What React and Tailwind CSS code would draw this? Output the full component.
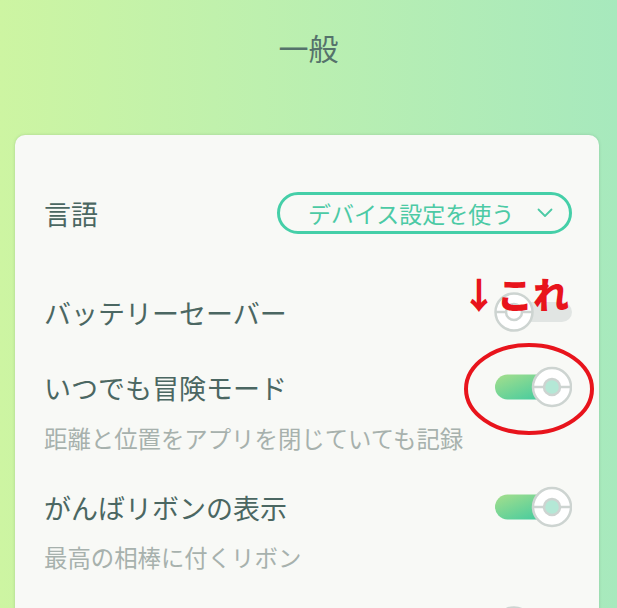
import React from 'react';

const FONT = { fontFamily: '"Noto Sans CJK JP", "Noto Sans", sans-serif' };

// pokeball-style switch, drawn as one picture
const Toggle = ({ on }) => {
  const gray = '#cdd4d1';
  if (on) {
    return (
      <svg width="80" height="44" viewBox="0 0 80 44" className="shrink-0">
        <defs>
          <linearGradient id="trk" x1="0" y1="0" x2="1" y2="1">
            <stop offset="0" stopColor="#a6df8c" />
            <stop offset="1" stopColor="#36c8a2" />
          </linearGradient>
        </defs>
        <rect x="3" y="9.5" width="62" height="25" rx="12.5" fill="url(#trk)" />
        <circle cx="60" cy="22" r="19" fill="#fff" stroke={gray} strokeWidth="2.5" />
        <line x1="41" y1="22" x2="79" y2="22" stroke={gray} strokeWidth="2.5" />
        <circle cx="60" cy="22" r="8" fill="#b4e8d6" stroke={gray} strokeWidth="2.5" />
      </svg>
    );
  }
  return (
    <svg width="80" height="44" viewBox="0 0 80 44" className="shrink-0">
      <rect x="13" y="12" width="67" height="20" rx="10" fill="#e1e5e3" />
      <circle cx="22" cy="22" r="18.5" fill="#fff" stroke={gray} strokeWidth="2.5" />
      <line x1="3.5" y1="22" x2="40.5" y2="22" stroke={gray} strokeWidth="2.5" />
      <circle cx="22" cy="22" r="8" fill="#fff" stroke={gray} strokeWidth="2.5" />
    </svg>
  );
};

const Row = ({ label, children, className }) => (
  <div className={`flex items-center justify-between h-[44px] ${className}`}>
    <span className="text-[27px] leading-none text-[#4b6762]">{label}</span>
    {children}
  </div>
);

const App = () => {
  return (
    <div
      className="h-[608px] w-[617px] overflow-hidden bg-gradient-to-r from-[#cdf5a2] to-[#a7e9bd]"
      style={FONT}
    >
      {/* header */}
      <div className="h-[135px] pt-[27px] text-center">
        <h1 className="text-[30px] leading-[40px] font-normal text-[#55726b]">一般</h1>
      </div>

      {/* settings card */}
      <div className="relative mx-[15px] w-[584px] h-[500px] rounded-[10px] bg-[#f8f9f6] shadow-[0_0_3px_rgba(60,110,80,0.25)] pl-[29px] pr-[27px] pt-[56px]">
        <Row label="言語">
          <button className="flex items-center h-[42px] w-[295px] rounded-full border-[3px] border-[#45cfa8] pl-[28px] pr-[16px] text-[23px] leading-none text-[#4ccaa5]">
            <span>デバイス設定を使う</span>
            <svg width="16" height="10" viewBox="0 0 16 10" className="ml-auto">
              <path d="M1.5 1.5 L8 8 L14.5 1.5" fill="none" stroke="#4ccaa5" strokeWidth="1.8" strokeLinecap="round" strokeLinejoin="round" />
            </svg>
          </button>
        </Row>

        <Row label="バッテリーセーバー" className="mt-[55px]">
          <Toggle on={false} />
        </Row>

        <Row label="いつでも冒険モード" className="mt-[31px]">
          <Toggle on />
        </Row>
        <p className="mt-[14px] text-[23.4px] leading-[30px] text-[#a7b1ad]">距離と位置をアプリを閉じていても記録</p>

        <Row label="がんばリボンの表示" className="mt-[32px]">
          <Toggle on />
        </Row>
        <p className="mt-[13px] text-[23.4px] leading-[30px] text-[#a7b1ad]">最高の相棒に付くリボン</p>

        <div className="mt-[32px] flex h-[44px] items-center justify-end">
          <Toggle on={false} />
        </div>

        {/* red annotation on top of the screenshot */}
        <span className="absolute left-[446px] top-[137px] text-[36px] leading-[42px] font-black text-[#e8141c] whitespace-nowrap">
          ↓これ
        </span>
        <svg className="absolute left-[447px] top-[206px]" width="134" height="96" viewBox="0 0 134 96">
          <ellipse cx="67" cy="48" rx="63" ry="44" fill="none" stroke="#e8141c" strokeWidth="4" />
        </svg>
      </div>
    </div>
  );
};

export default App;
